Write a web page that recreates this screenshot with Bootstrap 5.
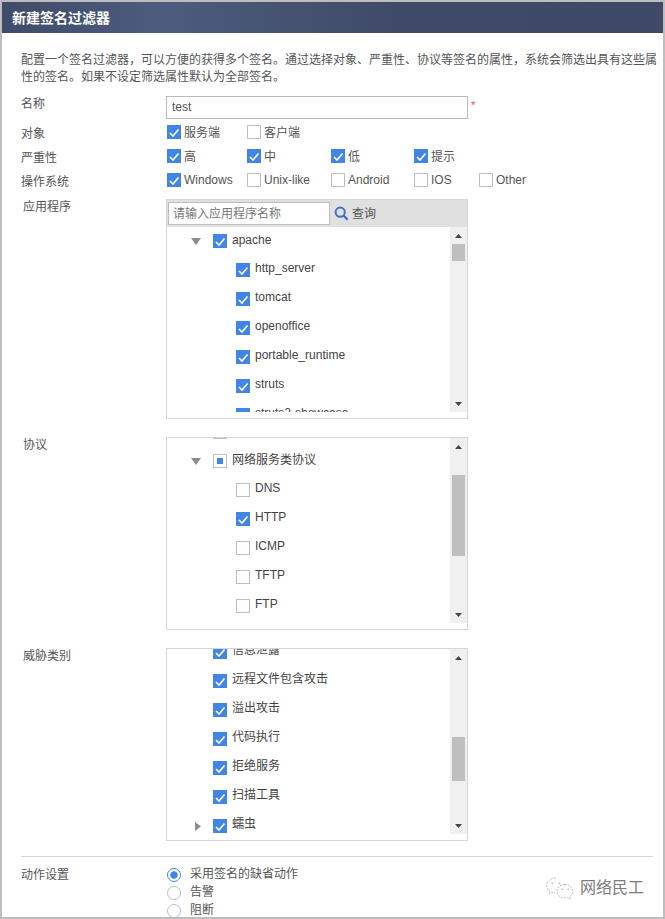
<!DOCTYPE html>
<html lang="zh-CN">
<head>
<meta charset="utf-8">
<title>新建签名过滤器</title>
<link href="https://cdn.jsdelivr.net/npm/bootstrap@5.3.0/dist/css/bootstrap.min.css" rel="stylesheet">
<style>
html,body{margin:0;background:#fff;}
body{font-family:"Liberation Sans","Noto Sans CJK SC",sans-serif;font-size:12px;color:#555;}
.frame{width:665px;height:919px;border:2px solid #bdbdbd;overflow:hidden;position:relative;background:#fff;}
.titlebar{height:31px;padding:1px 0 0 10px;color:#fff;font-weight:700;font-size:14px;line-height:31px;background:linear-gradient(90deg,#3f4c69 0%,#4c5c7e 24%,#3f4b66 60%,#3e4a65 100%);}
.content{padding:19px 4px 0 19px;}
.desc{line-height:17px;height:34px;margin:0 0 10px;}
.lbl{width:145px;flex:none;line-height:14px;}
.lbl-in{padding:1px 0 0 2px;}
.name-row{height:23px;margin-bottom:4px;}
.name-row .lbl{line-height:15px;padding-top:1px;}
.name-input.form-control{width:302px;height:23px;min-height:0;border:1px solid #b9b9c0;border-radius:0;padding:0 5px 2px;font-size:12px;color:#555;box-shadow:none;font-family:inherit;}
.req{color:#ee4444;margin:0 0 0 3px;font-size:11px;line-height:18px;}
.opt-row{height:24px;padding-top:2px;}
.opt-row .lbl{line-height:14px;padding-top:2px;}
.opt-last{margin-bottom:4px;}
.opts{display:grid;grid-template-columns:80px 84px 83px 65px auto;margin-left:1px;}
.opt{display:flex;align-items:center;height:14px;}
.opt-txt{margin-left:3px;line-height:14px;}
.opt-cjk{margin-top:2px;}
.form-check-input.tick{width:14px;height:14px;margin:0;flex:none;border-radius:0;border:1px solid #bcbcc4;background-color:#fff;box-shadow:none;opacity:1;}
.form-check-input.tick:checked{background-color:#4285e8;border-color:#4285e8;background-size:14px 14px;background-position:-1px -1px;background-image:url("data:image/svg+xml,%3csvg xmlns='http://www.w3.org/2000/svg' viewBox='0 0 14 14'%3e%3cpath d='M3 8l3 3 5.5-6.5' fill='none' stroke='%23fff' stroke-width='1.6'/%3e%3c/svg%3e");}
.form-check-input.part{background-image:linear-gradient(#4285e8,#4285e8);background-size:6px 6px;background-position:center;background-repeat:no-repeat;}
.panel-box{width:302px;border:1px solid #d6d6d6;background:#fff;}
.toolbar{height:27px;background:#e0e0e0;padding-left:1px;}
.search.form-control{width:162px;height:23px;min-height:0;border:1px solid #bdbdbd;border-radius:0;padding:0 4px;font-size:12px;font-family:inherit;color:#666;box-shadow:none;}
.search::placeholder{color:#777;opacity:1;}
.query{color:#555;margin-left:3px;}
.tree-view{height:185px;overflow:hidden;}
.tree-rows{width:283px;flex:none;}
.t-row{height:29px;flex:none;padding:0 0 1px 24px;color:#444;}
.t-row.kid{padding-left:69px;}
.t-row .form-check-input.tick{margin-right:5px;}
.slot{width:22px;flex:none;}
.t-txt{line-height:14px;margin-top:-5px;}
.t-top{margin-top:-2px;}
.sbar{width:17px;flex:none;background:#f0f0f0;}
.sb-arrow{height:17px;flex:none;}
.thumb{width:13px;background:#bfbfbf;margin-left:2px;flex:none;}
.panel-gap{margin-bottom:18px;}
.panel-end{height:6px;}
.divider{border-top:1px solid #d6d6d6;width:632px;margin:15px 0 9px;}
.radio-col{margin-left:1px;}
.action-lbl{padding-top:2px;}
.radio-item{height:18px;display:flex;align-items:center;}
.radio-txt{margin-top:-2px;}
.form-check-input.dot{width:14px;height:14px;margin:0 9px 0 0;flex:none;border:1px solid #bdbdc4;box-shadow:none;background-color:#fff;opacity:1;}
.form-check-input.dot:checked{background-color:#fff;border-color:#4285e8;background-image:radial-gradient(circle,#4285e8 0,#4285e8 3.4px,transparent 4px);}
.mark-wm{position:absolute;left:543px;top:874px;color:#7d7d7d;font-size:16px;line-height:24px;}
.mark-wm svg{margin-right:5px;}
</style>
</head>
<body>
<div class="frame">
  <div class="titlebar">新建签名过滤器</div>
  <div class="content">
    <p class="desc">配置一个签名过滤器，可以方便的获得多个签名。通过选择对象、严重性、协议等签名的属性，系统会筛选出具有这些属性的签名。如果不设定筛选属性默认为全部签名。</p>

    <div class="d-flex name-row">
      <div class="lbl">名称</div>
      <input class="form-control name-input" type="text" value="test">
      <span class="req">*</span>
    </div>

    <div class="d-flex opt-row">
      <div class="lbl">对象</div>
      <div class="opts">
        <label class="opt"><input class="form-check-input tick" type="checkbox" checked><span class="opt-txt opt-cjk">服务端</span></label>
        <label class="opt"><input class="form-check-input tick" type="checkbox"><span class="opt-txt opt-cjk">客户端</span></label>
      </div>
    </div>
    <div class="d-flex opt-row">
      <div class="lbl">严重性</div>
      <div class="opts">
        <label class="opt"><input class="form-check-input tick" type="checkbox" checked><span class="opt-txt opt-cjk">高</span></label>
        <label class="opt"><input class="form-check-input tick" type="checkbox" checked><span class="opt-txt opt-cjk">中</span></label>
        <label class="opt"><input class="form-check-input tick" type="checkbox" checked><span class="opt-txt opt-cjk">低</span></label>
        <label class="opt"><input class="form-check-input tick" type="checkbox" checked><span class="opt-txt opt-cjk">提示</span></label>
      </div>
    </div>
    <div class="d-flex opt-row opt-last">
      <div class="lbl">操作系统</div>
      <div class="opts">
        <label class="opt"><input class="form-check-input tick" type="checkbox" checked><span class="opt-txt">Windows</span></label>
        <label class="opt"><input class="form-check-input tick" type="checkbox"><span class="opt-txt">Unix-like</span></label>
        <label class="opt"><input class="form-check-input tick" type="checkbox"><span class="opt-txt">Android</span></label>
        <label class="opt"><input class="form-check-input tick" type="checkbox"><span class="opt-txt">IOS</span></label>
        <label class="opt"><input class="form-check-input tick" type="checkbox"><span class="opt-txt">Other</span></label>
      </div>
    </div>

    <div class="d-flex panel-gap">
      <div class="lbl lbl-in">应用程序</div>
      <div class="panel-box">
        <div class="toolbar d-flex align-items-center">
          <input class="form-control search" type="text" placeholder="请输入应用程序名称">
          <svg class="ms-1" width="15" height="15" viewBox="0 0 15 15"><circle cx="6.2" cy="6.2" r="4.6" fill="none" stroke="#3f72c4" stroke-width="2"/><path d="M9.6 9.6 13.6 13.6" stroke="#3f72c4" stroke-width="2.2"/></svg>
          <span class="query">查询</span>
        </div>
        <div class="tree-view d-flex">
          <div class="tree-rows d-flex flex-column">
            <div class="t-row d-flex align-items-center"><span class="slot"><svg width="10" height="7" viewBox="0 0 10 7"><path d="M0 0H10L5 7Z" fill="#8c8c8c"/></svg></span><input class="form-check-input tick" type="checkbox" checked><span class="t-txt t-top">apache</span></div>
            <div class="t-row kid d-flex align-items-center"><input class="form-check-input tick" type="checkbox" checked><span class="t-txt">http_server</span></div>
            <div class="t-row kid d-flex align-items-center"><input class="form-check-input tick" type="checkbox" checked><span class="t-txt">tomcat</span></div>
            <div class="t-row kid d-flex align-items-center"><input class="form-check-input tick" type="checkbox" checked><span class="t-txt">openoffice</span></div>
            <div class="t-row kid d-flex align-items-center"><input class="form-check-input tick" type="checkbox" checked><span class="t-txt">portable_runtime</span></div>
            <div class="t-row kid d-flex align-items-center"><input class="form-check-input tick" type="checkbox" checked><span class="t-txt">struts</span></div>
            <div class="t-row kid d-flex align-items-center"><input class="form-check-input tick" type="checkbox" checked><span class="t-txt">struts2-showcase</span></div>
          </div>
          <div class="sbar d-flex flex-column">
            <div class="sb-arrow d-flex align-items-center justify-content-center"><svg width="7" height="4" viewBox="0 0 7 4"><path d="M0 4H7L3.5 0Z" fill="#444"/></svg></div>
            <div class="thumb" style="height:17px"></div>
            <div class="sb-arrow mt-auto d-flex align-items-center justify-content-center"><svg width="7" height="4" viewBox="0 0 7 4"><path d="M0 0H7L3.5 4Z" fill="#444"/></svg></div>
          </div>
        </div>
        <div class="panel-end"></div>
      </div>
    </div>

    <div class="d-flex panel-gap">
      <div class="lbl lbl-in">协议</div>
      <div class="panel-box">
        <div class="tree-view d-flex">
          <div class="tree-rows d-flex flex-column" style="margin-top:-20px">
            <div class="t-row d-flex align-items-center"><span class="slot"></span><input class="form-check-input tick" type="checkbox"></div>
            <div class="t-row d-flex align-items-center"><span class="slot"><svg width="10" height="7" viewBox="0 0 10 7"><path d="M0 0H10L5 7Z" fill="#8c8c8c"/></svg></span><input class="form-check-input tick part" type="checkbox"><span class="t-txt t-top">网络服务类协议</span></div>
            <div class="t-row kid d-flex align-items-center"><input class="form-check-input tick" type="checkbox"><span class="t-txt">DNS</span></div>
            <div class="t-row kid d-flex align-items-center"><input class="form-check-input tick" type="checkbox" checked><span class="t-txt">HTTP</span></div>
            <div class="t-row kid d-flex align-items-center"><input class="form-check-input tick" type="checkbox"><span class="t-txt">ICMP</span></div>
            <div class="t-row kid d-flex align-items-center"><input class="form-check-input tick" type="checkbox"><span class="t-txt">TFTP</span></div>
            <div class="t-row kid d-flex align-items-center"><input class="form-check-input tick" type="checkbox"><span class="t-txt">FTP</span></div>
          </div>
          <div class="sbar d-flex flex-column">
            <div class="sb-arrow d-flex align-items-center justify-content-center"><svg width="7" height="4" viewBox="0 0 7 4"><path d="M0 4H7L3.5 0Z" fill="#444"/></svg></div>
            <div class="thumb" style="height:81px;margin-top:20px"></div>
            <div class="sb-arrow mt-auto d-flex align-items-center justify-content-center"><svg width="7" height="4" viewBox="0 0 7 4"><path d="M0 0H7L3.5 4Z" fill="#444"/></svg></div>
          </div>
        </div>
        <div class="panel-end"></div>
      </div>
    </div>

    <div class="d-flex">
      <div class="lbl lbl-in">威胁类别</div>
      <div class="panel-box">
        <div class="tree-view d-flex">
          <div class="tree-rows d-flex flex-column" style="margin-top:-11px">
            <div class="t-row d-flex align-items-center"><span class="slot"></span><input class="form-check-input tick" type="checkbox" checked><span class="t-txt">信息泄露</span></div>
            <div class="t-row d-flex align-items-center"><span class="slot"></span><input class="form-check-input tick" type="checkbox" checked><span class="t-txt">远程文件包含攻击</span></div>
            <div class="t-row d-flex align-items-center"><span class="slot"></span><input class="form-check-input tick" type="checkbox" checked><span class="t-txt">溢出攻击</span></div>
            <div class="t-row d-flex align-items-center"><span class="slot"></span><input class="form-check-input tick" type="checkbox" checked><span class="t-txt">代码执行</span></div>
            <div class="t-row d-flex align-items-center"><span class="slot"></span><input class="form-check-input tick" type="checkbox" checked><span class="t-txt">拒绝服务</span></div>
            <div class="t-row d-flex align-items-center"><span class="slot"></span><input class="form-check-input tick" type="checkbox" checked><span class="t-txt">扫描工具</span></div>
            <div class="t-row d-flex align-items-center"><span class="slot"><svg class="ms-1" width="6" height="9" viewBox="0 0 6 9"><path d="M0 0V9L6 4.5Z" fill="#8c8c8c"/></svg></span><input class="form-check-input tick" type="checkbox" checked><span class="t-txt">蠕虫</span></div>
          </div>
          <div class="sbar d-flex flex-column">
            <div class="sb-arrow d-flex align-items-center justify-content-center"><svg width="7" height="4" viewBox="0 0 7 4"><path d="M0 4H7L3.5 0Z" fill="#444"/></svg></div>
            <div class="thumb" style="height:44px;margin-top:71px"></div>
            <div class="sb-arrow mt-auto d-flex align-items-center justify-content-center"><svg width="7" height="4" viewBox="0 0 7 4"><path d="M0 0H7L3.5 4Z" fill="#444"/></svg></div>
          </div>
        </div>
        <div class="panel-end"></div>
      </div>
    </div>

    <div class="divider"></div>

    <div class="d-flex">
      <div class="lbl action-lbl">动作设置</div>
      <div class="radio-col">
        <label class="radio-item"><input class="form-check-input dot" type="radio" name="act" checked><span class="radio-txt">采用签名的缺省动作</span></label>
        <label class="radio-item"><input class="form-check-input dot" type="radio" name="act"><span class="radio-txt">告警</span></label>
        <label class="radio-item"><input class="form-check-input dot" type="radio" name="act"><span class="radio-txt">阻断</span></label>
      </div>
    </div>
  </div>

  <div class="mark-wm d-flex align-items-center">
    <svg width="30" height="24" viewBox="0 0 30 24" fill="none" stroke="#bdbdbd" stroke-width="1" stroke-dasharray="2 1.2"><path d="M11 2C5.5 2 1.5 5.4 1.5 9.6c0 2.4 1.3 4.4 3.4 5.8l-.8 2.6 3-1.6c1 .3 2 .4 3 .4"/><path d="M20 8.5c-4.6 0-8.2 3-8.2 6.8s3.6 6.8 8.2 6.8c1 0 1.9-.1 2.7-.4l2.5 1.4-.6-2.3c2-1.2 3.2-3.2 3.2-5.5 0-3.8-3.6-6.8-7.8-6.8z"/><circle cx="7.5" cy="7" r=".7"/><circle cx="14" cy="7" r=".7"/><circle cx="17" cy="13" r=".7"/><circle cx="23" cy="13" r=".7"/></svg>
    <span>网络民工</span>
  </div>
</div>
<script src="https://cdn.jsdelivr.net/npm/bootstrap@5.3.0/dist/js/bootstrap.bundle.min.js"></script>
</body>
</html>
